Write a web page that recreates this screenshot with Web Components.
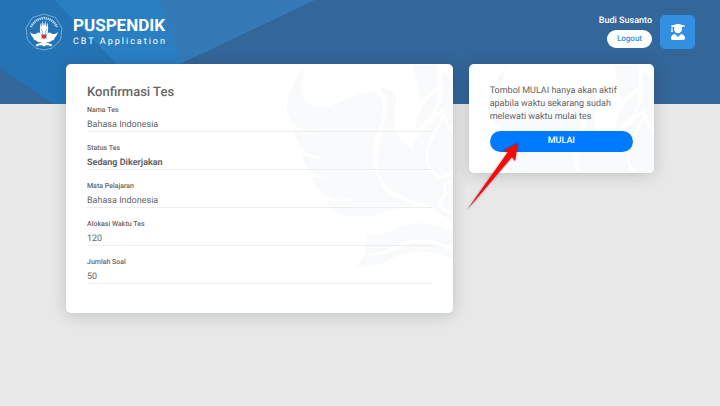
<!DOCTYPE html>
<html lang="id">
<head>
<meta charset="utf-8">
<meta name="viewport" content="width=device-width, initial-scale=1">
<title>PUSPENDIK - CBT Application</title>
<style>
    body {
        margin: 0;
        min-height: 100vh;
        background: #e8e8e8;
        font-family: Roboto, sans-serif;
        text-rendering: geometricPrecision;
        color: #666;
        --primary-color: #007bff;
        --line-color: #eee;
    }
</style>
</head>
<body>
<exam-app></exam-app>

<script>
function render(host, html) {
    const shadow = host.attachShadow({ mode: 'open' });
    const template = document.createElement('template');
    template.innerHTML = html;
    shadow.appendChild(template.content.cloneNode(true));
}

class BrandLogo extends HTMLElement {
    constructor() {
        super();
        render(this, `
            <style>
                :host { display: flex; align-items: center; gap: 10px; color: #fff; }
                svg { width: 38px; height: 38px; flex: none; }
                h1 { margin: 0; font-size: 17px; line-height: 20px; font-weight: 700; }
                p { margin: 0; font-size: 9px; line-height: 12px; letter-spacing: 2px; }
            </style>
            <svg viewBox="0 0 76 76" aria-hidden="true">
                <path d="M38 2L61 9L74 30L71 54L55 70L38 74L21 70L5 54L2 30L15 9Z" fill="none" stroke="#8dbfe3" stroke-width="1.5" stroke-linejoin="round"/>
                <path d="M12 28Q20 12 38 10Q56 12 64 28" fill="none" stroke="#c0dcf0" stroke-width="5" stroke-dasharray="2.5 1.5"/>
                <g fill="#fff">
                    <path d="M10 38Q15 44 23 41Q31 36 33 45L34 58Q26 60 22 55Q17 54 16 49Q12 46 10 38Z"/>
                    <path d="M66 38Q61 44 53 41Q45 36 43 45L42 58Q50 60 54 55Q59 54 60 49Q64 46 66 38Z"/>
                    <path d="M31 43Q28 30 32 19L34 29L35 15L38 26L41 15L42 29L45 19Q48 30 45 43Z"/>
                    <path d="M34 50H42L44 59L38 64L32 59Z"/>
                    <path d="M21 64Q31 57 38 62Q45 57 55 64L52 67Q44 62 38 67Q32 62 24 67Z"/>
                </g>
                <path d="M32 31Q36 36 35 44M44 31Q40 36 41 44" fill="none" stroke="#68a8d6" stroke-width="1.5"/>
                <path d="M34 44H42V50Q38 53 34 50Z" fill="#e22b2b"/>
            </svg>
            <div>
                <h1>PUSPENDIK</h1>
                <p>CBT Application</p>
            </div>
        `);
    }
}

class UserPanel extends HTMLElement {
    constructor() {
        super();
        render(this, `
            <style>
                :host { display: flex; align-items: flex-start; gap: 8px; }
                .info { display: flex; flex-direction: column; align-items: flex-end; gap: 2px; }
                .name { font-size: 9px; line-height: 13px; font-weight: 500; color: #fff; }
                button {
                    border: 0;
                    border-radius: 9px;
                    padding: 0 10px;
                    background: #fff;
                    color: #3390e0;
                    font: 500 8px/18px Roboto, sans-serif;
                    text-rendering: inherit;
                }
                .avatar {
                    display: grid;
                    place-items: center;
                    width: 35px;
                    height: 34px;
                    border-radius: 5px;
                    background: #3390e0;
                }
                .avatar svg { width: 14px; height: 16px; }
            </style>
            <div class="info">
                <span class="name"><slot></slot></span>
                <button type="button">Logout</button>
            </div>
            <div class="avatar">
                <svg viewBox="0 0 448 512" fill="#fff" aria-hidden="true">
                    <path d="M319 321L224 416L129 321C57 324 0 383 0 454V464C0 490 22 512 48 512H400C426 512 448 490 448 464V454C448 383 391 324 319 321ZM13 83L20 85V143C13 147 8 155 8 163C8 171 12 178 19 182L3 245C2 252 6 258 11 258H53C58 258 62 252 61 245L45 182C52 178 56 171 56 163C56 155 51 147 44 143V91L110 107A128 128 0 1 0 338 107L435 83C452 79 452 54 435 50L241 3C230 0 218 0 207 3L13 50C-4 54-4 79 13 83Z"/>
                </svg>
            </div>
        `);
    }
}

class MainHeader extends HTMLElement {
    constructor() {
        super();
        render(this, `
            <style>
                :host { display: grid; background: #336699; }
                .backdrop, header { grid-area: 1 / 1; }
                .backdrop { width: 720px; height: 104px; }
                header {
                    display: flex;
                    justify-content: space-between;
                    align-items: flex-start;
                    padding: 13px 25px 0;
                    z-index: 1;
                }
                user-panel { margin-top: 2px; }
            </style>
            <svg class="backdrop" viewBox="0 0 720 104" aria-hidden="true">
                <path d="M0 0H54L156 104H54L0 69Z" fill="#2474b5"/>
                <path d="M54 0H160L198 104H156Z" fill="#2a7fc3"/>
                <path d="M160 0H315L182 63Z" fill="#357ab7"/>
                <path d="M182 63L97 104H198Z" fill="#336699"/>
            </svg>
            <header>
                <brand-logo></brand-logo>
                <user-panel>Budi Susanto</user-panel>
            </header>
        `);
    }
}

class PanelCard extends HTMLElement {
    constructor() {
        super();
        render(this, `
            <style>
                :host {
                    display: grid;
                    border-radius: 5px;
                    background: #fff;
                    box-shadow: 0 2px 16px rgba(0, 20, 20, 0.18);
                }
                .mark {
                    grid-area: 1 / 1;
                    height: 0;
                    min-height: 100%;
                    overflow: hidden;
                    border-radius: 5px;
                    text-align: right;
                }
                .mark svg { width: 170px; height: 205px; }
                .content { grid-area: 1 / 1; padding: 21px; z-index: 1; }
            </style>
            <div class="mark">
                <svg viewBox="0 0 170 205" fill="#f9fafc" aria-hidden="true">
                    <path d="M22 1C15 14 4 28 4 42C3 57 14 67 38 71Q22 72 11 65Q11 77 21 86Q29 93 45 94Q30 96 19 90Q20 103 30 110Q39 114 54 113Q41 115 29 113Q36 131 49 134Q56 137 67 134V137Q56 139 44 136Q48 149 62 151Q79 155 100 149L131 141Q111 134 102 126C91 110 87 96 92 77C98 55 103 48 98 36C95 27 86 26 78 29L54 39C44 43 33 45 24 39C17 33 18 15 22 1Z"/>
                    <path d="M95 24C105 23 114 26 113 39C111 50 109 61 114 70Q118 79 129 84Q130 78 138 69L160 48L170 30V158Q158 149 140 139C120 134 103 126 97 111C91 99 97 77 102 56C106 40 107 33 95 24Z"/>
                    <path d="M130 1H155V23Q141 32 137 36Z"/>
                    <path d="M155 26V36Q153 49 132 66Q132 46 155 26ZM159 7Q170 15 170 26Q168 40 160 45Q149 52 137 70Q156 50 159 30Z"/>
                    <path d="M161 49C156 66 144 76 144 91C144 104 150 111 160 114L170 108M161 49Q163 62 170 69M170 117Q158 120 163 130Q154 137 160 145L170 150" fill="none" stroke="#fff" stroke-width="3"/>
                    <path d="M84 171Q101 172 116 163C134 156 150 159 170 168V184C145 171 125 175 108 184Q95 191 82 189ZM81 191Q96 193 110 187C130 176 147 175 170 188V195C140 183 122 187 97 200Q88 203 74 202Z"/>
                </svg>
            </div>
            <div class="content"><slot></slot></div>
        `);
    }
}

class DetailList extends HTMLElement {
    constructor() {
        super();
        render(this, `
            <style>
                :host { display: block; padding-bottom: 8px; }
                h2 { margin: 0 0 4px; font-size: 13px; line-height: 16px; font-weight: 500; }
                dl { margin: 0; display: grid; gap: 11px; }
                dt { font-size: 7px; line-height: 10px; font-weight: 500; }
                dd {
                    margin: 0;
                    padding: 5px 0 1px;
                    border-bottom: 1px solid var(--line-color);
                    font-size: 9px;
                    line-height: 10px;
                }
                .strong { font-weight: 700; }
            </style>
            <h2>Konfirmasi Tes</h2>
            <dl>
                <div><dt>Nama Tes</dt><dd>Bahasa Indonesia</dd></div>
                <div><dt>Status Tes</dt><dd class="strong">Sedang Dikerjakan</dd></div>
                <div><dt>Mata Pelajaran</dt><dd>Bahasa Indonesia</dd></div>
                <div><dt>Alokasi Waktu Tes</dt><dd>120</dd></div>
                <div><dt>Jumlah Soal</dt><dd>50</dd></div>
            </dl>
        `);
    }
}

class StartPanel extends HTMLElement {
    constructor() {
        super();
        render(this, `
            <style>
                :host { display: block; }
                p { margin: 0 0 7px; font-size: 9px; line-height: 13px; }
                .action { position: relative; }
                button {
                    display: block;
                    width: 100%;
                    border: 0;
                    border-radius: 11px;
                    padding: 0;
                    background: var(--primary-color);
                    color: #fff;
                    font: 500 9px/21px Roboto, sans-serif;
                    text-rendering: inherit;
                }
                /* pointer lies over the button and leaves the card at its lower left */
                .pointer {
                    position: absolute;
                    left: -24px;
                    top: 12px;
                    width: 53px;
                    height: 70px;
                    pointer-events: none;
                    filter: drop-shadow(0 0 1px rgba(0, 0, 0, 0.5));
                }
            </style>
            <p>Tombol MULAI hanya akan aktif apabila waktu sekarang sudah melewati waktu mulai tes</p>
            <div class="action">
                <button type="button">MULAI</button>
                <svg class="pointer" viewBox="0 0 53 70" fill="#fb0707" aria-hidden="true">
                    <path d="M52 0L37 8L42 9L1 67L46 14L49 18Z"/>
                </svg>
            </div>
        `);
    }
}

class ExamApp extends HTMLElement {
    constructor() {
        super();
        render(this, `
            <style>
                :host { display: block; }
                main {
                    display: grid;
                    grid-template-columns: 2fr 1fr;
                    align-items: start;
                    max-width: 604px;
                    margin: -40px auto 0;
                    padding-bottom: 32px;
                }
                panel-card { margin: 0 8px; }
            </style>
            <main-header></main-header>
            <main>
                <panel-card><detail-list></detail-list></panel-card>
                <panel-card><start-panel></start-panel></panel-card>
            </main>
        `);
    }
}

customElements.define('brand-logo', BrandLogo);
customElements.define('user-panel', UserPanel);
customElements.define('main-header', MainHeader);
customElements.define('panel-card', PanelCard);
customElements.define('detail-list', DetailList);
customElements.define('start-panel', StartPanel);
customElements.define('exam-app', ExamApp);
</script>
</body>
</html>
